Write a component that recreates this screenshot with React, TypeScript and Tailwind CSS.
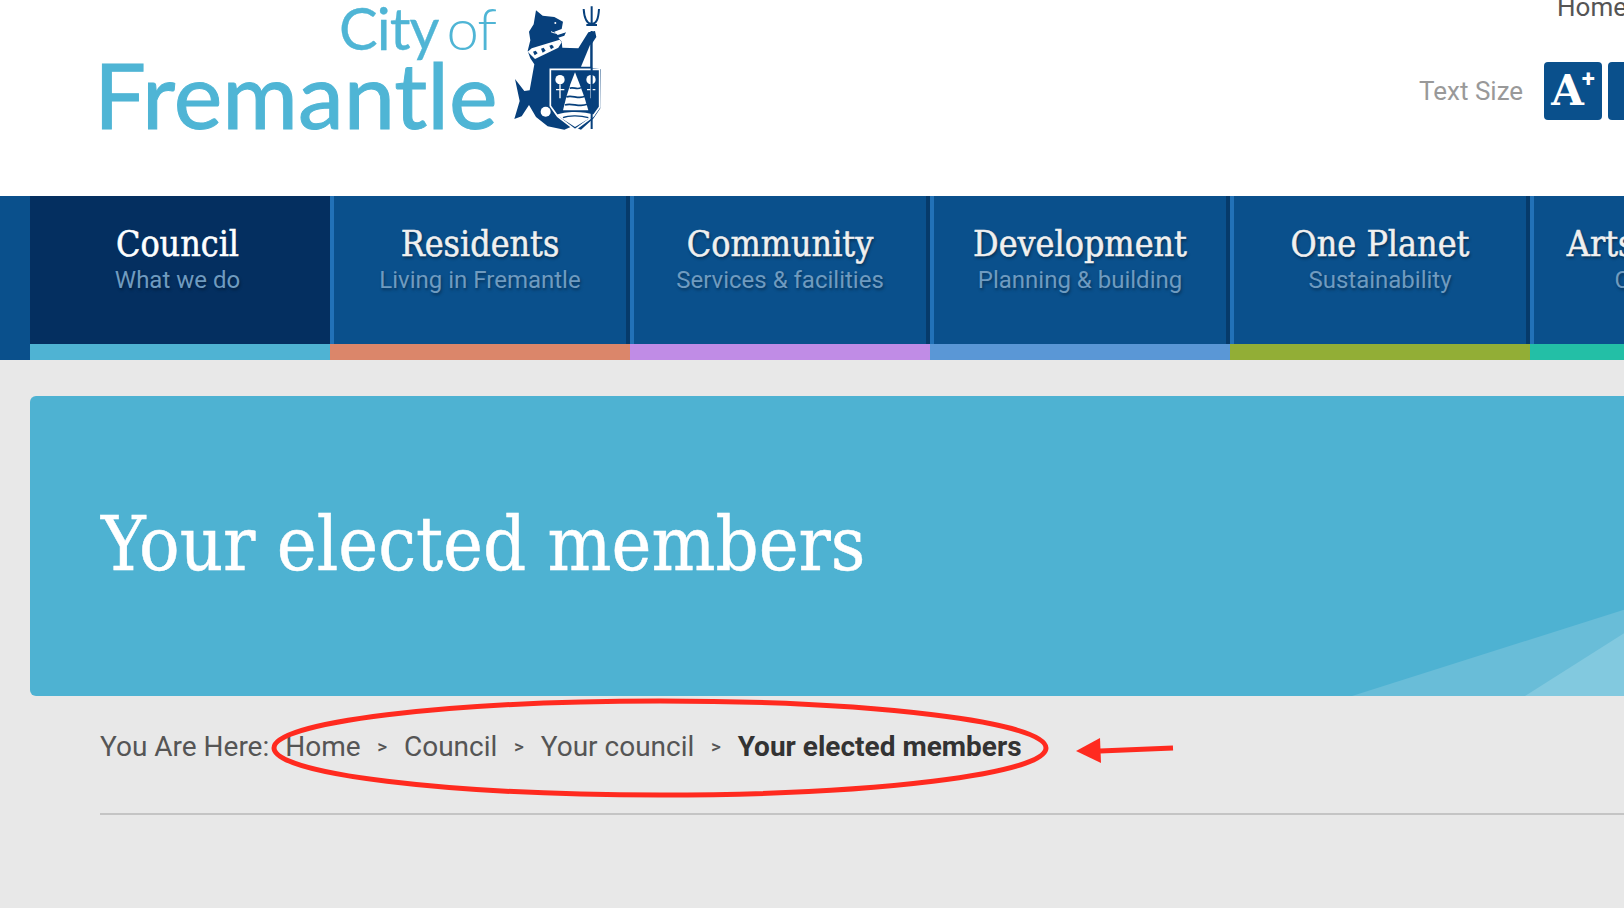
const navItems = [
  { title: 'Council', sub: 'What we do', strip: 'bg-[#4fb3d3]', active: true },
  { title: 'Residents', sub: 'Living in Fremantle', strip: 'bg-[#db866a]', active: false },
  { title: 'Community', sub: 'Services & facilities', strip: 'bg-[#c08ce6]', active: false },
  { title: 'Development', sub: 'Planning & building', strip: 'bg-[#5a97d6]', active: false },
  { title: 'One Planet', sub: 'Sustainability', strip: 'bg-[#92ae36]', active: false },
  { title: 'Arts & Events', sub: 'Creative city', strip: 'bg-[#23bfa6]', active: false },
];

const Crest = () => (
  <svg viewBox="0 0 330 420" className="w-[110px] h-[140px] shrink-0">
    {/* lion and fish tail */}
    <path
      fill="#07407c"
      d="M105 28 L125 44 L160 48 L186 62 L182 84 L160 92 L170 102 L195 94 L190 104 L172 110 L182 122 L184 140 L232 142 L262 94 L282 90 L286 108 L270 132 L272 200 L300 205 L298 322 L278 352 L240 386 L214 376 L190 386 L140 376 L105 348 L84 312 L62 346 L40 354 L56 300 L42 234 L70 270 L86 268 L100 190 L88 172 L80 150 L88 118 L84 92 L98 70 Z"
    />
    <path fill="#fff" d="M240 197 L268 130 L268 197 Z" />
    {/* crown */}
    <path fill="#fff" d="M80 152 L92 142 L176 116 L182 124 L172 140 L102 174 Z" />
    <path fill="#07407c" d="M96 152 L104 149 L110 157 L101 163 Z M120 143 L128 140 L134 149 L125 155 Z M145 134 L153 131 L159 139 L150 145 Z" />
    {/* shield */}
    <path fill="#07407c" stroke="#fff" strokeWidth="5" d="M148 205 L296 205 L296 318 L276 346 L222 386 L170 346 L148 315 Z" />
    <path fill="#fff" d="M222 214 L236 250 L250 288 L262 328 L186 328 L196 288 L208 250 Z" />
    <path stroke="#07407c" strokeWidth="5" fill="none" d="M206 262 C216 256 228 268 240 260 M196 288 C212 280 232 296 252 286 M192 312 C210 304 236 320 258 310" />
    <circle cx="177" cy="236" r="14" fill="#fff" />
    <circle cx="270" cy="236" r="14" fill="#fff" />
    <path stroke="#fff" strokeWidth="4" fill="none" d="M177 250 V292 M165 266 H190 M270 250 V292 M258 266 H283" />
    <path fill="#fff" d="M166 342 C190 330 250 330 282 342 L222 378 Z" />
    <path stroke="#07407c" strokeWidth="4" fill="none" d="M186 350 C205 342 240 344 262 350" />
    <circle cx="134" cy="332" r="15" fill="#fff" />
    {/* trident */}
    <path stroke="#07407c" strokeWidth="6" fill="none" d="M272 90 V384 M248 24 C250 56 258 68 272 70 C286 68 292 56 294 24 M272 16 V70 M256 72 L288 72" />
    <circle cx="163" cy="66" r="3" fill="#fff" />
    <path stroke="#fff" strokeWidth="3" fill="none" d="M150 92 C165 100 180 96 192 92" />
  </svg>
);

const Sep = () => <span className="mx-[16.75px] text-[19px] font-medium">&gt;</span>;

export default function App() {
  return (
    <div className="relative w-[1624px] h-[908px] overflow-hidden bg-[#e8e8e8] font-['Roboto',sans-serif]">
      <header className="flex h-[196px] bg-white pl-[100px]">
        <div className="flex">
          <div className="flex flex-col items-end w-[398px] font-['Lato',sans-serif] text-[#4fb5d5]">
            <div className="h-[56px] leading-[56px] text-[58px] tracking-[-1px] mr-[2px] [-webkit-text-stroke:0.3px_#4fb5d5]">
              City<span className="ml-[8px] font-light [-webkit-text-stroke:0px]">of</span>
            </div>
            <div className="h-[80px] leading-[76px] text-[92px] self-start whitespace-nowrap -ml-[6px] [-webkit-text-stroke:1px_#4fb5d5]">
              Fremantle
            </div>
          </div>
          <div className="mt-[1px] ml-[3px]">
            <Crest />
          </div>
        </div>
        <div className="ml-auto w-[205px] shrink-0 overflow-hidden">
          <div className="flex justify-end -mt-[8px] h-[31px]">
            <span className="w-[67px] text-[26px] leading-[31px] text-[#555] whitespace-nowrap">Home</span>
          </div>
          <div className="flex items-center mt-[39px]">
            <span className="text-[26px] pt-[1px] text-[#999] whitespace-nowrap w-[125px] shrink-0">Text Size</span>
            <div className="flex gap-[6px]">
              <div className="flex w-[58px] h-[58px] shrink-0 rounded-[4px] bg-[#0a508c] items-center justify-center text-white font-['DejaVu_Serif',serif] font-bold text-[42px] leading-none">
                A<sup className="text-[24px] font-['Roboto',sans-serif] -ml-[2px] top-[-12px]">+</sup>
              </div>
              <div className="w-[58px] h-[58px] shrink-0 rounded-[4px] bg-[#0a508c]" />
            </div>
          </div>
        </div>
      </header>

      <nav className="flex h-[164px] pl-[30px] bg-[#0a508c]">
        {navItems.map((item) => (
          <div key={item.title} className="flex flex-col w-[300px] shrink-0">
            <div
              className={
                item.active
                  ? 'h-[148px] bg-[#042f60] text-center pt-[26px] pr-[5px]'
                  : 'h-[148px] bg-[#0a508c] border-l-4 border-r-4 border-l-[#2272b8] border-r-[#063a6a] text-center pt-[26px]'
              }
            >
              <div
                className={
                  item.active
                    ? "font-['DejaVu_Serif_Condensed','DejaVu_Serif',serif] text-[35.5px] leading-[44px] text-white [-webkit-text-stroke:0.5px_#fff] whitespace-nowrap"
                    : "font-['DejaVu_Serif_Condensed','DejaVu_Serif',serif] text-[35.5px] leading-[44px] text-[#f0f0f0] [-webkit-text-stroke:0.5px_#f0f0f0] [text-shadow:1px_2px_3px_rgba(0,0,0,0.45)] whitespace-nowrap"
                }
              >
                {item.title}
              </div>
              <div className="text-[24px] leading-[28px] text-[#6f9bc0] [text-shadow:1px_2px_3px_rgba(0,0,0,0.35)] whitespace-nowrap">
                {item.sub}
              </div>
            </div>
            <div className={`h-[16px] ${item.strip}`} />
          </div>
        ))}
      </nav>

      <main className="pt-[36px] pl-[30px]">
        <section className="relative h-[300px] w-[1700px] rounded-md bg-[#4eb2d2] overflow-hidden flex items-center pl-[71px]">
          <svg viewBox="0 0 1700 300" className="absolute inset-0 w-[1700px] h-[300px]">
            <polygon points="1322,300 1700,180 1700,300" fill="#69bdd8" />
            <polygon points="1495,300 1700,170 1700,300" fill="#82c9df" />
          </svg>
          <h1 className="relative -mt-[4px] font-['DejaVu_Serif_Condensed','DejaVu_Serif',serif] text-[75px] leading-none text-white whitespace-nowrap [-webkit-text-stroke:0.5px_#fff]">
            Your elected members
          </h1>
        </section>

        <div className="ml-[70px] pt-[32px] flex items-center text-[28px] leading-[38px] text-[#555] whitespace-nowrap">
          <span>You Are Here:</span>
          <span className="ml-[16px]">Home</span>
          <Sep />
          <span>Council</span>
          <Sep />
          <span>Your council</span>
          <Sep />
          <span className="font-bold text-[#333]">Your elected members</span>
        </div>
        <div className="ml-[70px] mt-[47px] h-[2px] bg-[#c4c4c4]" />
      </main>

      <svg viewBox="0 0 1624 908" className="absolute inset-0 w-[1624px] h-[908px] pointer-events-none">
        <ellipse cx="660" cy="748" rx="386" ry="47" fill="none" stroke="#ff2a1f" strokeWidth="5" />
        <path d="M1100 751 L1173 748" stroke="#ff2a1f" strokeWidth="5" fill="none" />
        <polygon points="1076,751 1100,738 1101,763" fill="#ff2a1f" />
      </svg>
    </div>
  );
}
